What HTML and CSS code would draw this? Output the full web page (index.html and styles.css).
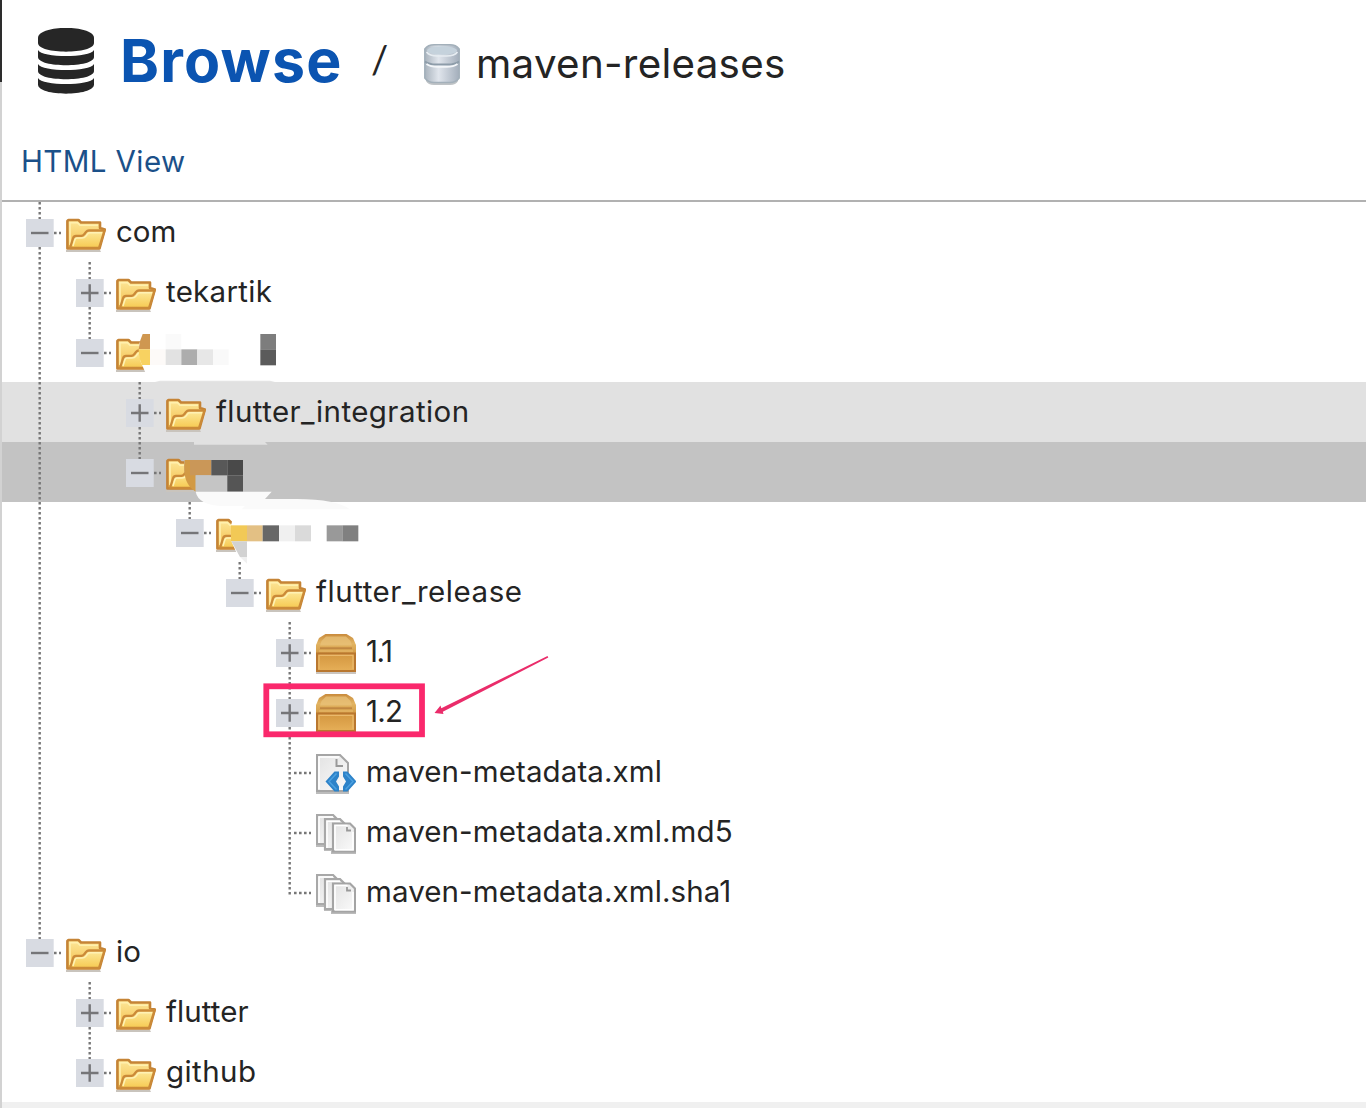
FILE: index.html
```html
<!DOCTYPE html>
<html lang="en">
<head>
<meta charset="utf-8">
<title>Browse / maven-releases</title>
<link rel="stylesheet" href="styles.css">
</head>
<body>
<svg class="defs" width="0" height="0">
  <defs>
    <linearGradient id="gf" x1="0" y1="0" x2="0" y2="1"><stop offset="0" stop-color="#fdea9c"/><stop offset="1" stop-color="#f6c951"/></linearGradient>
    <linearGradient id="gb" x1="0" y1="0" x2="0" y2="1"><stop offset="0" stop-color="#fde79a"/><stop offset="1" stop-color="#f3bd48"/></linearGradient>
    <linearGradient id="gl" x1="0" y1="0" x2="0" y2="1"><stop offset="0" stop-color="#c98b3d"/><stop offset=".5" stop-color="#e2b462"/><stop offset="1" stop-color="#d39c48"/></linearGradient>
    <linearGradient id="gx" x1="0" y1="0" x2="0" y2="1"><stop offset="0" stop-color="#d3963f"/><stop offset="1" stop-color="#e6af58"/></linearGradient>
    <linearGradient id="gd" x1="0" y1="0" x2="1" y2="0"><stop offset="0" stop-color="#a9b3bd"/><stop offset=".4" stop-color="#e0e5ec"/><stop offset="1" stop-color="#a3aebb"/></linearGradient>
    <linearGradient id="gp" x1="0" y1="0" x2="1" y2="1"><stop offset="0" stop-color="#e2e2e2"/><stop offset="1" stop-color="#fbfbfb"/></linearGradient>
  </defs>
  <symbol id="up" viewBox="0 0 50 60"><path class="dots" d="M24.7 0V17"/></symbol>
  <symbol id="line" viewBox="0 0 50 60"><path class="dots" d="M24.7 0V60"/></symbol>
  <symbol id="tee" viewBox="0 0 50 60"><path class="dots" d="M24.7 0V60"/><path class="dots" d="M29 31H46"/></symbol>
  <symbol id="elbow" viewBox="0 0 50 60"><path class="dots" d="M24.7 0V33"/><path class="dots" d="M29 31H46"/></symbol>
  <symbol id="minus" viewBox="0 0 50 60"><path class="dots" d="M39 31H46"/><path class="toggle" d="M11 17h27.7v28H11z"/><path class="sign" d="M16 31h17.5"/></symbol>
  <symbol id="plus" viewBox="0 0 50 60"><path class="dots" d="M39 31H46"/><path class="toggle" d="M11 17h27.7v28H11z"/><path class="sign" d="M16 31h17.5M24.7 22.3v17.4"/></symbol>
  <symbol id="folder" viewBox="0 0 40 40">
    <path d="M0 36h34l1 2H0z" fill="#c9c4bd"/>
    <path d="M1.4 34.500V7L2.500 6H12.500L15 8.500H34V14L38.800 15.500 33.500 34.500H1.400z" fill="url(#gb)" stroke="#c58436" stroke-width="2.600" stroke-linejoin="round"/>
    <path d="M4 31V8.800h7.500L14 11.300H32" fill="none" stroke="#fff0ae" stroke-width="1.600"/>
    <path d="M4 34L7 24.500q.8-2.500 3-2.500H15q2 0 3.500-2l1.500-2q1.200-1.500 3-1.500H38.500L33 34z" fill="url(#gf)" stroke="#cb8a38" stroke-width="2.300" stroke-linejoin="round"/>
    <path d="M7 32L9 25.500q.5-1.400 2-1.400h5q2.500 0 4-2l1.500-2q1-1.300 2.500-1.300H36" fill="none" stroke="#fff2b5" stroke-width="1.500"/>
  </symbol>
  <symbol id="box" viewBox="0 0 40 40">
    <path d="M0 37h40v3H0z" fill="#cbc5bf"/>
    <path d="M9.500 0H30.500L37 4 40 11V19H0V11L3 4z" fill="url(#gl)"/>
    <path d="M10 2.500H30L34.500 7 36 11.500H4L5.500 7z" fill="#e8c279" opacity=".75"/>
    <path d="M4 14.200H36" stroke="#c08741" stroke-width="1.800"/>
    <path d="M3 17H37" stroke="#e3b564" stroke-width="1.500"/>
    <path d="M1 19.500H39V37H1z" fill="url(#gx)" stroke="#b9772f" stroke-width="2"/>
    <path d="M3 35V21.300H37V35" fill="none" stroke="#eab96c" stroke-width="1.300"/>
  </symbol>
  <symbol id="xml" viewBox="0 0 40 40">
    <path d="M0 36h33v4H0z" fill="#bcbcbc"/>
    <path d="M1 1H24L32 9V37H1z" fill="url(#gp)" stroke="#a5a5a5" stroke-width="2"/>
    <path d="M3 35V3H23" fill="none" stroke="#fff" stroke-width="1.700"/>
    <path d="M20.500 5V12H27" fill="none" stroke="#999" stroke-width="2"/>
    <path d="M18.500 17.500h4.500v5L20 27.500l3 5v5H18.500L9.500 27.500zM27 17.500h4.500L40.500 27.500 31.500 37.500h-4.500v-5l3-5-3-5z" fill="#2d83c9"/>
    <path d="M20.500 19.500L13 27.500l7.500 8M29.500 19.500L37 27.500l-7.500 8" stroke="#4ba1e0" stroke-width="1.500" fill="none"/>
  </symbol>
  <symbol id="files" viewBox="0 0 40 40">
    <path d="M0 29h10v5h7v4h23v2H15v-3H8v-4H0z" fill="#bbb"/>
    <path d="M1 1H17L23 7V30H1z" fill="url(#gp)" stroke="#a8a8a8" stroke-width="2.200"/>
    <path d="M3 29V3H17" fill="none" stroke="#fff" stroke-width="1.500"/>
    <path d="M9 5.200H24L31 12V35H9z" fill="url(#gp)" stroke="#a8a8a8" stroke-width="2.200"/>
    <path d="M11 34V7.200H24" fill="none" stroke="#fff" stroke-width="1.500"/>
    <path d="M17 9.500H34L39 14.500V37.500H17z" fill="url(#gp)" stroke="#a4a4a4" stroke-width="2.200"/>
    <path d="M19 36V11.500H31.500M37 18V35.700H19" fill="none" stroke="#fff" stroke-width="1.600"/>
    <path d="M31 13V16.500H35" fill="none" stroke="#999" stroke-width="1.800"/>
  </symbol>
</svg>

<div class="page">
  <div class="rail"><div class="rail-dark"></div></div>
  <main class="content">
    <header class="header">
      <svg class="db" viewBox="0 0 56 66">
        <path d="M0 10C0-3.400 56-3.400 56 10v5C56 26.500 0 26.500 0 15z"/>
        <path d="M0 22C4 30 52 30 56 22v7C56 40 0 40 0 29z"/>
        <path d="M0 36C4 44 52 44 56 36v7C56 54 0 54 0 43z"/>
        <path d="M0 50C4 58 52 58 56 50v6.500C56 68.700 0 68.700 0 56.500z"/>
      </svg>
      <h1 class="title">Browse</h1>
      <span class="slash">/</span>
      <svg class="repo-icon" viewBox="0 0 36 41">
        <path d="M2 34h32v3q-2 4-8 4H10q-6 0-8-4z" fill="#bfc3c6"/>
        <path d="M.8 5Q4 .8 10 .8H26Q32 .8 35.200 5V34Q32 38.500 26 38.500H10Q4 38.500.8 34z" fill="url(#gd)" stroke="#a3b0ba" stroke-width="1.500"/>
        <ellipse cx="18" cy="6.500" rx="15" ry="4.300" fill="#c5d2dc"/>
        <path d="M2.500 8q3 4 11 4h9q8 0 11-4" fill="none" stroke="#e6ecf1" stroke-width="1.600"/>
        <path d="M1 17.500q4 3 11 3h12q7 0 11-3" fill="none" stroke="#8d9ca9" stroke-width="1.800"/>
        <path d="M2.500 20q4 2.800 11 2.800h9q7 0 11-2.800" fill="none" stroke="#f3f6f9" stroke-width="2"/>
      </svg>
      <span class="repo">maven-releases</span>
    </header>
    <div class="toolbar"><a class="link">HTML View</a></div>
    <div class="tree">
      <div class="row"><svg class="cell"><use href="#line"/><use href="#minus"/></svg><svg class="icon"><use href="#folder"/></svg><span>com</span></div>
      <div class="row"><svg class="cell"><use href="#line"/></svg><svg class="cell"><use href="#line"/><use href="#plus"/></svg><svg class="icon"><use href="#folder"/></svg><span class="loose">tekartik</span></div>
      <div class="row"><svg class="cell"><use href="#line"/></svg><svg class="cell"><use href="#up"/><use href="#minus"/></svg><svg class="icon"><use href="#folder"/></svg></div>
      <div class="row hover"><svg class="cell"><use href="#line"/></svg><i class="cell"></i><svg class="cell"><use href="#line"/><use href="#plus"/></svg><svg class="icon"><use href="#folder"/></svg><span class="looser">flutter_integration</span></div>
      <div class="row selected"><svg class="cell"><use href="#line"/></svg><i class="cell"></i><svg class="cell"><use href="#up"/><use href="#minus"/></svg><svg class="icon"><use href="#folder"/></svg></div>
      <div class="row"><svg class="cell"><use href="#line"/></svg><i class="cell"></i><i class="cell"></i><svg class="cell"><use href="#up"/><use href="#minus"/></svg><svg class="icon"><use href="#folder"/></svg></div>
      <div class="row"><svg class="cell"><use href="#line"/></svg><i class="cell"></i><i class="cell"></i><i class="cell"></i><svg class="cell"><use href="#up"/><use href="#minus"/></svg><svg class="icon"><use href="#folder"/></svg><span class="loosest">flutter_release</span></div>
      <div class="row"><svg class="cell"><use href="#line"/></svg><i class="cell"></i><i class="cell"></i><i class="cell"></i><i class="cell"></i><svg class="cell"><use href="#line"/><use href="#plus"/></svg><svg class="icon"><use href="#box"/></svg><span class="tighter">1.1</span></div>
      <div class="row"><svg class="cell"><use href="#line"/></svg><i class="cell"></i><i class="cell"></i><i class="cell"></i><i class="cell"></i><svg class="cell"><use href="#line"/><use href="#plus"/></svg><svg class="icon"><use href="#box"/></svg><span class="tight">1.2</span></div>
      <div class="row"><svg class="cell"><use href="#line"/></svg><i class="cell"></i><i class="cell"></i><i class="cell"></i><i class="cell"></i><svg class="cell"><use href="#tee"/></svg><svg class="icon"><use href="#xml"/></svg><span class="file">maven-metadata.xml</span></div>
      <div class="row"><svg class="cell"><use href="#line"/></svg><i class="cell"></i><i class="cell"></i><i class="cell"></i><i class="cell"></i><svg class="cell"><use href="#tee"/></svg><svg class="icon"><use href="#files"/></svg><span class="file">maven-metadata.xml.md5</span></div>
      <div class="row"><svg class="cell"><use href="#line"/></svg><i class="cell"></i><i class="cell"></i><i class="cell"></i><i class="cell"></i><svg class="cell"><use href="#elbow"/></svg><svg class="icon"><use href="#files"/></svg><span class="file">maven-metadata.xml.sha1</span></div>
      <div class="row"><svg class="cell"><use href="#up"/><use href="#minus"/></svg><svg class="icon"><use href="#folder"/></svg><span>io</span></div>
      <div class="row"><i class="cell"></i><svg class="cell"><use href="#line"/><use href="#plus"/></svg><svg class="icon"><use href="#folder"/></svg><span class="file">flutter</span></div>
      <div class="row"><i class="cell"></i><svg class="cell"><use href="#up"/><use href="#plus"/></svg><svg class="icon"><use href="#folder"/></svg><span class="looser">github</span></div>
    </div>
    <div class="footer"></div>
  </main>
</div>

<svg class="markup" viewBox="0 0 1366 1108">
  <!-- redacted names -->
  <g transform="translate(100 320) scale(.33333)">
    <path d="M128 38L117 75V100L122 125 137 160H175V38z" fill="#fff"/>
    <path d="M128 42h22v46H116q2-26 12-46z" fill="#cf9750"/>
    <path d="M116 88h34v47H126q-10-20-10-47z" fill="#f8d261"/>
    <path d="M150 88h47v47h-47z" fill="#fdfaf8"/><path d="M197 42h47v46h-47z" fill="#fafafa"/>
    <path d="M197 88h47v47h-47z" fill="#e2e2e2"/><path d="M244 88h48v47h-48z" fill="#adadad"/>
    <path d="M292 88h47v47h-47z" fill="#e7e7e7"/><path d="M339 88h47v47h-47z" fill="#f9f9f9"/>
    <path d="M481 42h47v46h-47z" fill="#7d7d7d"/><path d="M481 88h47v48h-47z" fill="#5b5b5b"/>
    <path d="M165 186l15-4H510l15 4z" fill="#e4e4e4"/>
    <path d="M282 366H495l8 8H282z" fill="#e1e1e1"/>
    <path d="M254 415H325V512H287Q245 480 254 415z" fill="#c3c3c3"/>
    <path d="M254 420h33v95Q245 490 254 420z" fill="#d29a45"/>
    <path d="M270 420h64v46h-64z" fill="#ca9758"/>
    <path d="M287 466h95v49h-95z" fill="#c5c5c5"/>
    <path d="M334 420h48v46h-48z" fill="#585858"/><path d="M382 420h47v46h-47z" fill="#494949"/>
    <path d="M382 466h47v49h-47z" fill="#555"/>
    <path d="M287 515H515L495 537H590Q710 538 750 568H425L435 558H370Q295 556 287 515z" fill="#fafafa"/>
    <path d="M398 590Q390 630 394 664L415 710H480V590z" fill="#fff"/>
    <path d="M393 616h48v48h-48z" fill="#f2c956"/><path d="M441 616h47v48h-47z" fill="#e3c084"/>
    <path d="M488 616h49v48h-49z" fill="#676767"/><path d="M537 616h48v48h-48z" fill="#f0f0f0"/>
    <path d="M585 616h48v48h-48z" fill="#dadada"/><path d="M680 616h47v48h-47z" fill="#999"/>
    <path d="M727 616h48v48h-48z" fill="#808080"/>
    <path d="M394 664h47v47H420z" fill="#d2d2d2"/><path d="M420 711h21v20z" fill="#f0f0f0"/>
  </g>
  <rect x="266.300" y="686.300" width="155.700" height="48" fill="none" stroke="#fa286c" stroke-width="5.800"/>
  <path d="M434.500 713L440.500 705.500 441.300 708.300 547.500 656 548.300 657.600 442.800 711.700 443.500 714z" fill="#ea2c6a"/>
</svg>
</body>
</html>
```
FILE: styles.css
```css
* { box-sizing: border-box; }
body {
  margin: 0;
  position: relative;
  background: #fff;
  color: #242424;
  font-family: Inter, "Open Sans", sans-serif;
}
.defs { position: absolute; }
.page { display: flex; width: 1366px; height: 1108px; overflow: hidden; }
.rail { width: 2px; background: #d2d2d2; }
.rail-dark { height: 82px; background: #2d2d2d; }
.content { flex: 1; display: flex; flex-direction: column; }
.header { height: 122px; display: flex; align-items: flex-start; padding-left: 36px; }
.db { width: 56px; height: 66px; margin-top: 28px; fill: #262626; }
.title {
  margin: 25px 0 0 26px;
  width: 246px;
  font-size: 59px;
  line-height: 72px;
  font-weight: 700;
  letter-spacing: 1.2px;
  color: #0b54b1;
}
.slash { width: 52px; margin-top: 34px; padding-left: 5px; font-family: Lato, sans-serif; font-size: 38px; line-height: 50px; }
.repo-icon { width: 36px; height: 41px; margin: 44px 0 0 6px; }
.repo { margin: 39px 0 0 16px; font-size: 40.3px; line-height: 50px; letter-spacing: 0.3px; white-space: nowrap; }
.toolbar { height: 80px; padding: 19px 0 0 19px; border-bottom: 2px solid #b1b1b1; }
.link { font-size: 29.5px; line-height: 40px; letter-spacing: 0.4px; color: #1b5089; }
.tree { display: flex; flex-direction: column; }
.row { display: flex; height: 60px; padding-left: 13px; font-size: 29.5px; line-height: 58px; white-space: nowrap; }
.hover { background: #e1e1e1; }
.selected { background: #c3c3c3; }
.file { letter-spacing: 0.1px; }
.loose { letter-spacing: 0.28px; }
.looser { letter-spacing: 0.43px; }
.loosest { letter-spacing: 0.55px; }
.tight { letter-spacing: -0.7px; }
.tighter { letter-spacing: -1.5px; }
.cell { width: 50px; height: 60px; flex: none; }
.icon { width: 40px; height: 40px; margin: 12px 10px 0 1px; flex: none; }
.dots { fill: none; stroke: #777; stroke-width: 2.4; stroke-dasharray: 2.6 2.4; }
.toggle { fill: #d8dbe2; }
.sign { fill: none; stroke: #757578; stroke-width: 2.4; }
.footer { height: 6px; background: #f0f0f0; }
.markup { position: absolute; left: 0; top: 0; width: 1366px; height: 1108px; }
```
